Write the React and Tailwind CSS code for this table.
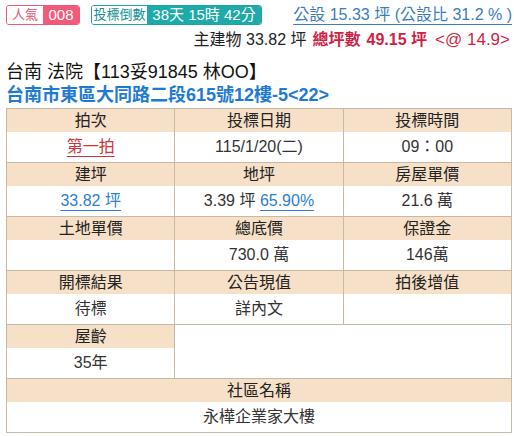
const font = { fontFamily: '"Liberation Sans", "Noto Sans CJK TC", sans-serif' };

function Cell({ label, children, className = "" }) {
  return (
    <div className={"flex flex-col " + className}>
      <div className="h-[23px] bg-[#f6e0c8] flex items-center justify-center text-[16px] text-[#222]">
        {label}
      </div>
      <div className="h-[30px] bg-white flex items-center justify-center text-[16px] text-[#333]">
        {children}
      </div>
    </div>
  );
}

export default function App() {
  const rows = [
    [
      { label: "拍次", value: <span className="text-[#d2323c] underline underline-offset-4 decoration-1">第一拍</span> },
      { label: "投標日期", value: "115/1/20(二)" },
      { label: "投標時間", value: "09：00" },
    ],
    [
      { label: "建坪", value: <span className="text-[#2c7fd2] underline underline-offset-4 decoration-1">33.82 坪</span> },
      {
        label: "地坪",
        value: (
          <span>
            3.39 坪{" "}
            <span className="text-[#2c7fd2] underline underline-offset-4 decoration-1">65.90%</span>
          </span>
        ),
      },
      { label: "房屋單價", value: "21.6 萬" },
    ],
    [
      { label: "土地單價", value: "" },
      { label: "總底價", value: "730.0 萬" },
      { label: "保證金", value: "146萬" },
    ],
    [
      { label: "開標結果", value: "待標" },
      { label: "公告現值", value: "詳內文" },
      { label: "拍後增值", value: "" },
    ],
  ];

  return (
    <div className="w-[514px] h-[436px] bg-white overflow-hidden" style={font}>
      <div className="flex items-center justify-between pl-[6px] pr-[2px] pt-[3px]">
        <div className="flex items-center gap-[11px]">
          <div className="flex h-[20px] rounded-[3px] border border-[#f0587a] overflow-hidden text-[13px]">
            <span className="w-[36px] flex items-center justify-center text-[#e8506e] bg-white">人氣</span>
            <span className="w-[36px] flex items-center justify-center text-white bg-[#f25a7a] text-[15px]">008</span>
          </div>
          <div className="flex h-[20px] rounded-[3px] border border-[#1aa6a6] overflow-hidden text-[13px]">
            <span className="w-[55px] flex items-center justify-center text-[#138f92] bg-white">投標倒數</span>
            <span className="w-[114px] flex items-center justify-center text-white bg-[#1daaa9] text-[15px]">38天 15時 42分</span>
          </div>
        </div>
        <span className="text-[16px] text-[#3b7cc0] underline underline-offset-4 decoration-1">
          公設 15.33 坪 (公設比 31.2 % )
        </span>
      </div>

      <div className="flex justify-end items-baseline pr-[4px] mt-[3px] text-[16px] text-[#222] leading-[20px]">
        <span>主建物 33.82 坪</span>
        <span className="ml-[6px] text-[#d01f46] font-bold">總坪數</span>
        <span className="ml-[6px] text-[#d01f46] font-bold">49.15 坪</span>
        <span className="ml-[8px] text-[#d01f46] text-[17px]">&lt;@ 14.9&gt;</span>
      </div>

      <div className="pl-[6px] mt-[10px] text-[18px] text-[#111] leading-[24px]">
        台南 法院【113妥91845 林OO】
      </div>
      <div className="pl-[6px] text-[18px] font-bold text-[#1f7ad2] leading-[22px]">
        台南市東區大同路二段615號12樓-5&lt;22&gt;
      </div>

      <div className="ml-[6px] mr-[2px] mt-[2px] border border-[#c8b9a4] bg-[#c8b9a4] flex flex-col gap-px">
        {rows.map((row, i) => (
          <div key={i} className="grid grid-cols-3 gap-px">
            {row.map((c, j) => (
              <Cell key={j} label={c.label}>
                {c.value}
              </Cell>
            ))}
          </div>
        ))}
        <div className="grid grid-cols-3 gap-px">
          <Cell label="屋齡">35年</Cell>
          <div className="col-span-2 bg-white" />
        </div>
        <Cell label="社區名稱">永樺企業家大樓</Cell>
      </div>
    </div>
  );
}
